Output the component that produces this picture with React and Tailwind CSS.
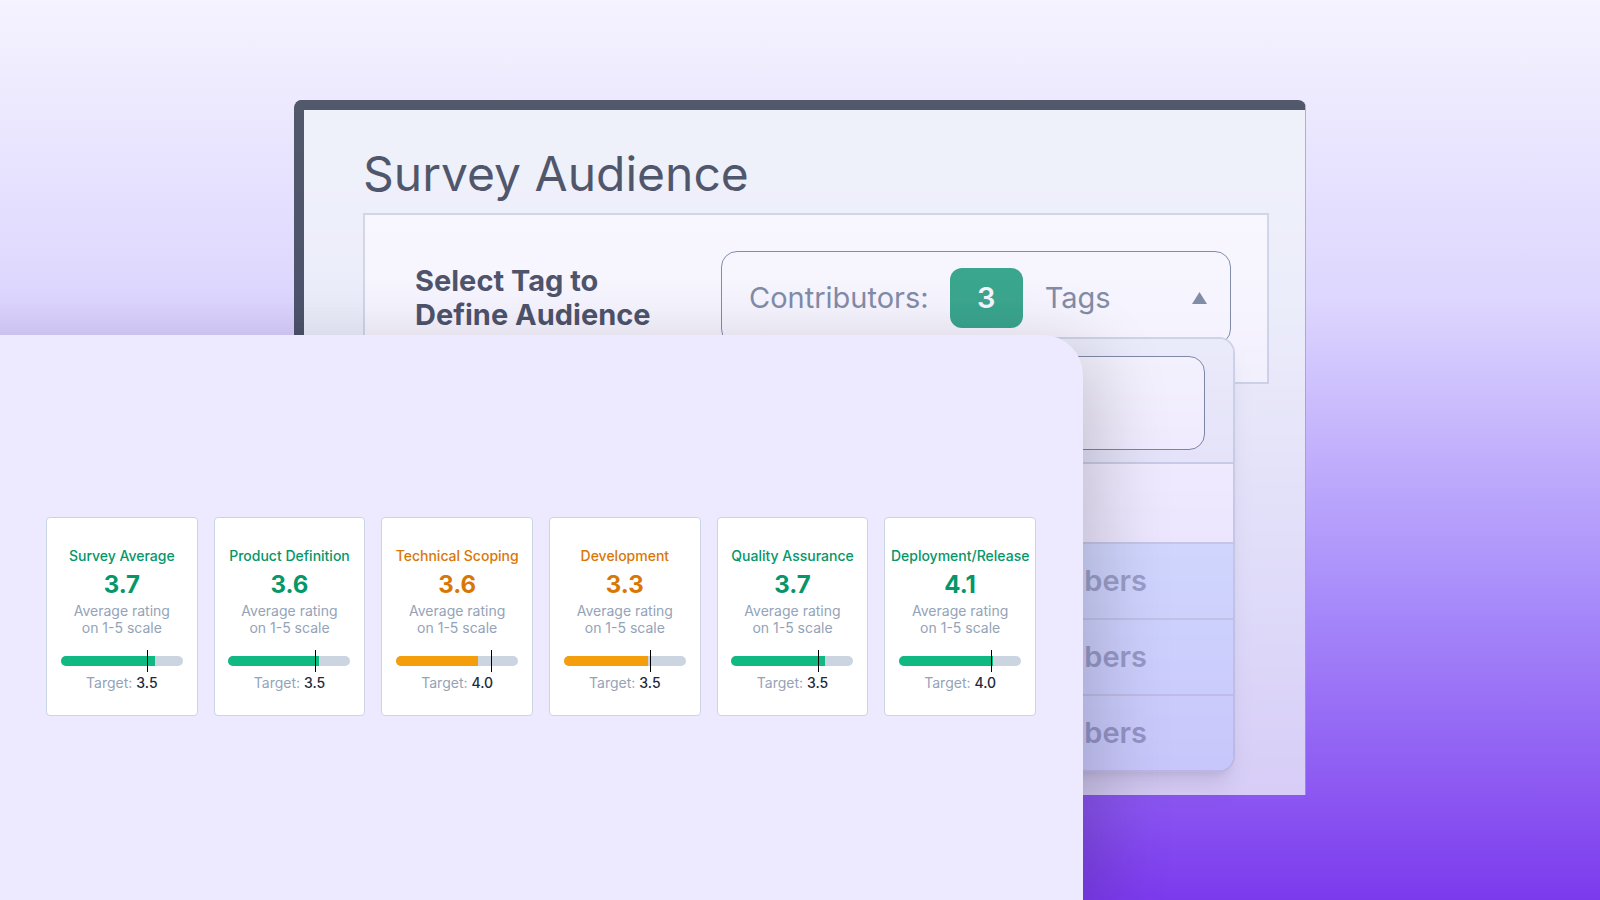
const RATINGS = [
  { name: "Survey Average",     score: "3.7", target: "3.5", fill: 77, mark: 71, tone: "good" },
  { name: "Product Definition", score: "3.6", target: "3.5", fill: 74, mark: 71, tone: "good" },
  { name: "Technical Scoping",  score: "3.6", target: "4.0", fill: 67, mark: 78, tone: "warn" },
  { name: "Development",        score: "3.3", target: "3.5", fill: 69, mark: 71, tone: "warn" },
  { name: "Quality Assurance",  score: "3.7", target: "3.5", fill: 77, mark: 71, tone: "good" },
  { name: "Deployment/Release", score: "4.1", target: "4.0", fill: 77, mark: 75, tone: "good" },
];

const TONES = {
  good: { text: "text-[#059669]", bar: "bg-[#10b981]" },
  warn: { text: "text-[#d97706]", bar: "bg-[#f59e0b]" },
};

const TAG_ROWS = ["first", "second", "third"];

export default function App() {
  return (
    <main className="relative h-screen overflow-hidden bg-[linear-gradient(to_bottom,#f5f3ff,#ddd6fe,#a78bfa,#7c3aed)] px-[294px] pt-[100px] font-['Inter',sans-serif]">
      <AudiencePanel />
      <RatingsPanel />
    </main>
  );
}

/* ── Audience picker behind the ratings ── */
function AudiencePanel() {
  return (
    <section className="h-[695px] rounded-t-lg border-t-10 border-r border-l-10 border-t-[#1e293b] border-r-[#94a3b8] border-l-[#1e293b] bg-[#f1f5f9] pt-[34px] pr-9 pl-[59px] text-[#1e293b] opacity-75">
      <h1 className="pb-[9px] text-5xl leading-[60px]">Survey Audience</h1>
      <div className="flex h-[171px] border-2 border-[#cbd5e1] bg-white pt-9 pr-9 pl-[50px]">
        <p id="audience-label" className="flex-1 pt-[13px] text-[29px] leading-[34px] font-bold">
          Select Tag to
          <br />
          Define Audience
        </p>
        <div className="relative w-[510px]">
          <button
            type="button"
            aria-expanded="true"
            aria-describedby="audience-label"
            className="flex h-[94px] w-full items-center rounded-2xl border border-[#64748b] pr-[23px] pl-[27px] text-[29px] text-[#64748b]"
          >
            <span>Contributors:</span>
            <span className="ml-[21px] flex h-[60px] w-[73px] items-center justify-center rounded-xl bg-[#059669] font-semibold text-white">3</span>
            <span className="ml-[22px]">Tags</span>
            <svg className="ml-auto h-3 w-[15px]" viewBox="0 0 15 12" fill="currentColor" aria-hidden="true">
              <path d="M7.5 0 15 12H0z" />
            </svg>
          </button>
          <TagMenu />
        </div>
      </div>
    </section>
  );
}

function TagMenu() {
  return (
    <div className="absolute top-[86px] -right-1 -left-1 overflow-hidden rounded-2xl border-2 border-[#cbd5e1] bg-white shadow-xl">
      <div className="border-b-2 border-[#cbd5e1] bg-[#f1f5f9] px-7 pt-[17px] pb-3">
        <input
          type="text"
          aria-label="Search tags"
          className="block h-[94px] w-full rounded-2xl border border-[#64748b] bg-white px-7 text-[29px]"
        />
      </div>
      <div className="h-[78px]" />
      <ul>
        {TAG_ROWS.map((row) => (
          <li key={row} className="flex h-[76px] items-center justify-end border-t-2 border-[#cbd5e1] bg-[#dbeafe] pr-[86px] text-[29px] font-semibold text-[#94a3b8]">
            Members
          </li>
        ))}
      </ul>
    </div>
  );
}

/* ── Ratings sheet in front, its left edge runs off the page ── */
function RatingsPanel() {
  return (
    <section className="absolute top-[335px] right-[517px] bottom-0 -left-24 rounded-tr-[40px] bg-[#ede9fe] pt-[182px] pr-[47px] pl-[142px] shadow-[16px_16px_72px_rgba(0,0,0,0.18)]">
      <div className="grid grid-cols-6 gap-4">
        {RATINGS.map((rating) => (
          <RatingCard key={rating.name} {...rating} />
        ))}
      </div>
    </section>
  );
}

function RatingCard({ name, score, target, fill, mark, tone }) {
  const { text, bar } = TONES[tone];
  return (
    <article className="flex flex-col items-center rounded border border-[#cbd5e1] bg-white pt-[30px] pb-6 text-center text-sm leading-4 whitespace-nowrap text-[#94a3b8]">
      <h2 className={`font-medium ${text}`}>{name}</h2>
      <p className={`pt-[9px] text-2xl leading-6 font-bold ${text}`}>{score}</p>
      <p className="pt-[5px] leading-[17px]">
        Average rating
        <br />
        on 1-5 scale
      </p>
      <div className="relative mt-5 h-2.5 w-[122px]">
        <div className="h-full overflow-hidden rounded-full bg-[#cbd5e1]">
          <div className={`h-full ${bar}`} style={{ width: `${fill}%` }} />
        </div>
        <div className="absolute -top-1.5 h-[22px] w-px bg-black" style={{ left: `${mark}%` }} />
      </div>
      <p className="pt-[9px]">
        Target: <span className="font-medium text-[#1e293b]">{target}</span>
      </p>
    </article>
  );
}
